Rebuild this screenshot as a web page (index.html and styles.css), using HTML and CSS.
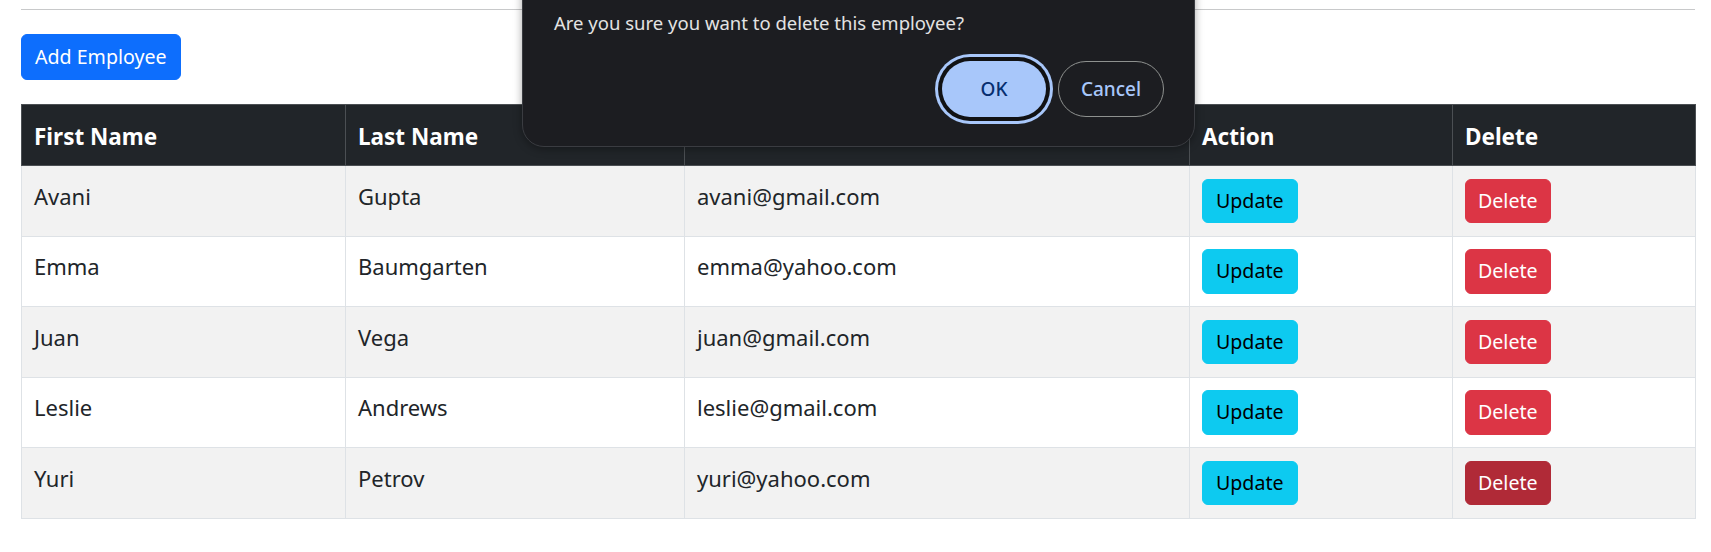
FILE: index.html
```html
<!DOCTYPE html>
<html lang="en">
<head>
<meta charset="utf-8">
<title>Employees</title>
<link rel="stylesheet" href="styles.css">
</head>
<body>
<div class="page">
  <hr class="rule">
  <div class="toolbar">
    <button class="btn btn-primary">Add Employee</button>
  </div>
  <table class="grid">
    <colgroup>
      <col class="c1"><col class="c2"><col class="c3"><col class="c4"><col class="c5">
    </colgroup>
    <thead>
      <tr><th>First Name</th><th>Last Name</th><th>Email</th><th>Action</th><th>Delete</th></tr>
    </thead>
    <tbody>
      <tr><td>Avani</td><td>Gupta</td><td>avani@gmail.com</td><td><button class="btn btn-info">Update</button></td><td><button class="btn btn-danger">Delete</button></td></tr>
      <tr><td>Emma</td><td>Baumgarten</td><td>emma@yahoo.com</td><td><button class="btn btn-info">Update</button></td><td><button class="btn btn-danger">Delete</button></td></tr>
      <tr><td>Juan</td><td>Vega</td><td>juan@gmail.com</td><td><button class="btn btn-info">Update</button></td><td><button class="btn btn-danger">Delete</button></td></tr>
      <tr><td>Leslie</td><td>Andrews</td><td>leslie@gmail.com</td><td><button class="btn btn-info">Update</button></td><td><button class="btn btn-danger">Delete</button></td></tr>
      <tr><td>Yuri</td><td>Petrov</td><td>yuri@yahoo.com</td><td><button class="btn btn-info">Update</button></td><td><button class="btn btn-danger btn-hover">Delete</button></td></tr>
    </tbody>
  </table>
</div>
<div class="dialog" role="dialog">
  <p class="dialog-msg">Are you sure you want to delete this employee?</p>
  <div class="dialog-actions">
    <button class="dbtn dbtn-ok">OK</button>
    <button class="dbtn dbtn-cancel">Cancel</button>
  </div>
</div>
</body>
</html>
```
FILE: styles.css
```css
* { box-sizing: border-box; }
html, body { margin: 0; padding: 0; background: #fff; }
body {
  font-family: "Noto Sans", "Open Sans", sans-serif;
  color: #212529;
  width: 1711px;
  height: 552px;
  overflow: hidden;
  position: relative;
}
.page {
  padding: 9px 16px 0 21px;
}
.rule {
  margin: 0;
  border: 0;
  border-top: 1px solid #c8c9ca;
}
.toolbar {
  padding: 24px 0 24px 0;
  display: flex;
}
.btn {
  font-family: inherit;
  font-size: 19.6px;
  line-height: 30px;
  border: 1px solid transparent;
  border-radius: 6px;
  cursor: pointer;
  margin: 0;
}
.btn-primary {
  background: #0d6efd;
  border-color: #0d6efd;
  color: #fff;
  height: 46px;
  padding: 0 13px;
}
.btn-info {
  background: #0dcaf0;
  border-color: #0dcaf0;
  color: #000;
  height: 44.5px;
  padding: 0 13px;
  display: block;
}
.btn-danger {
  background: #dc3545;
  border-color: #dc3545;
  color: #fff;
  height: 44.5px;
  padding: 0 12px;
  display: block;
}
.btn-hover {
  background: #b02a37;
  border-color: #b02a37;
}
.grid {
  width: 1674px;
  border-collapse: collapse;
  table-layout: fixed;
  border: 1px solid #dee2e6;
}
.c1 { width: 324px; }
.c2 { width: 339px; }
.c3 { width: 505px; }
.c4 { width: 263px; }
.c5 { width: 243px; }
.grid th {
  background: #212529;
  color: #fff;
  font-weight: 700;
  font-size: 22.5px;
  text-align: left;
  height: 61px;
  padding: 2px 12px 0 12px;
  border: 1px solid #4b4f53;
  vertical-align: middle;
}
.grid td {
  font-size: 22px;
  height: 70.5px;
  padding: 12.5px 12px;
  border: 1px solid #dee2e6;
  vertical-align: top;
  line-height: 34px;
}
.grid tbody tr:nth-child(odd) td { background: #f2f2f2; }
.grid tbody tr:nth-child(even) td { background: #fff; }

.dialog {
  position: absolute;
  left: 522px;
  top: -40px;
  width: 673px;
  height: 187px;
  background: #1c1d21;
  border: 1px solid #3a3c41;
  border-radius: 22px;
  box-shadow: 0 2px 8px rgba(0,0,0,0.35);
  padding: 0 30px 0 31px;
  display: flex;
  flex-direction: column;
}
.dialog-msg {
  margin: 0;
  margin-top: 50px;
  color: #e3e3e3;
  font-size: 18.5px;
  line-height: 24px;
}
.dialog-actions {
  margin-top: 26px;
  display: flex;
  justify-content: flex-end;
  gap: 12px;
}
.dbtn {
  font-family: inherit;
  font-size: 19px;
  font-weight: 500;
  height: 56px;
  border-radius: 28px;
  padding: 0;
  margin: 0;
}
.dbtn-ok {
  width: 104px;
  background: #a8c7fa;
  color: #062e6f;
  border: 0;
  box-shadow: 0 0 0 4px #111214, 0 0 0 7px #a8c7fa;
}
.dbtn-cancel {
  width: 106px;
  background: transparent;
  color: #a8c7fa;
  border: 1px solid #8e918f;
}
```
